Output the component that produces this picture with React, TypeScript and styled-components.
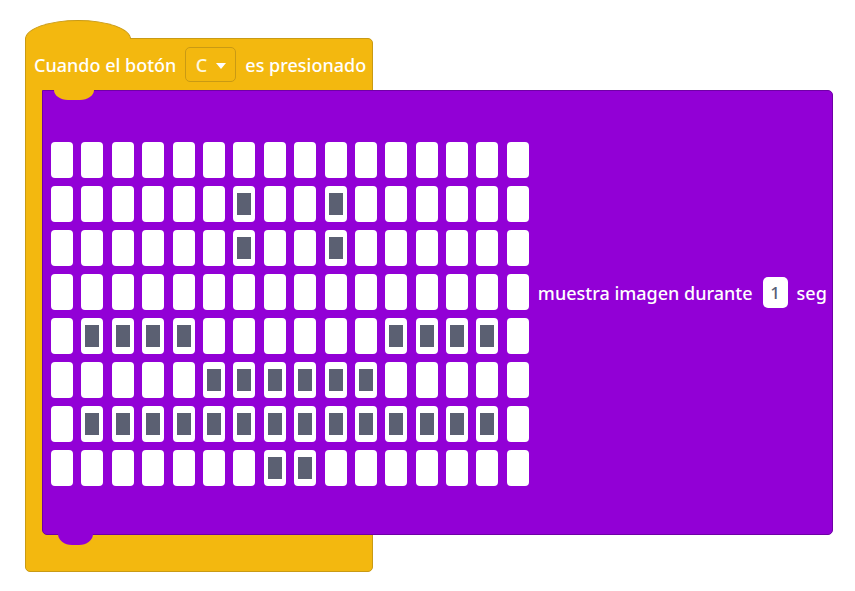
import React from "react";
import styled, { createGlobalStyle } from "styled-components";

const Global = createGlobalStyle`
  html, body { margin: 0; padding: 0; background: #ffffff; }
  body { font-family: "Noto Sans", "Open Sans", Arial, sans-serif; }
`;

const YELLOW = "#f3b80f";
const YELLOW_EDGE = "#c99a14";
const PURPLE = "#9200d6";
const PURPLE_EDGE = "#6f00a6";
const DARK = "#5b6072";

const Page = styled.div`
  padding: 38px 0 0 25px;
`;

const HatBlock = styled.div`
  position: relative;
  width: 348px;
  box-sizing: border-box;
  background: ${YELLOW};
  border: 1px solid ${YELLOW_EDGE};
  border-radius: 0 5px 5px 5px;
  display: flex;
  flex-direction: column;

  &::before {
    content: "";
    position: absolute;
    left: -1px;
    top: -19px;
    width: 106px;
    height: 19px;
    box-sizing: border-box;
    background: ${YELLOW};
    border: 1px solid ${YELLOW_EDGE};
    border-bottom: none;
    border-radius: 53px 53px 0 0 / 19px 19px 0 0;
  }
  &::after {
    content: "";
    position: absolute;
    left: 0;
    top: -1px;
    width: 104px;
    height: 2px;
    background: ${YELLOW};
  }
`;

const Header = styled.div`
  height: 51px;
  display: flex;
  align-items: center;
  gap: 9px;
  padding-left: 8px;
  color: #ffffff;
  font-size: 18px;
  font-weight: 500;
  white-space: nowrap;
`;

const Dropdown = styled.div`
  width: 51px;
  height: 35px;
  box-sizing: border-box;
  border: 1px solid ${YELLOW_EDGE};
  border-radius: 5px;
  display: flex;
  align-items: center;
  justify-content: center;
  gap: 9px;
  color: #fff8e0;
  font-size: 18px;
  font-weight: 500;
`;

const Caret = styled.span`
  width: 0;
  height: 0;
  border-left: 5px solid transparent;
  border-right: 5px solid transparent;
  border-top: 6px solid #ffffff;
  margin-top: 2px;
`;

const Panel = styled.div`
  position: relative;
  margin-left: 16px;
  width: 791px;
  height: 445px;
  box-sizing: border-box;
  background: ${PURPLE};
  border: 1px solid ${PURPLE_EDGE};
  border-radius: 0 5px 5px 5px;
  display: flex;
  align-items: flex-start;
  padding: 51px 0 0 8px;

  &::before {
    content: "";
    position: absolute;
    top: -1px;
    left: 11px;
    width: 40px;
    height: 10px;
    background: ${YELLOW};
    border-radius: 0 0 14px 14px / 0 0 10px 10px;
  }
  &::after {
    content: "";
    position: absolute;
    bottom: -11px;
    left: 15px;
    width: 35px;
    height: 11px;
    background: ${PURPLE};
    border-radius: 0 0 14px 14px / 0 0 11px 11px;
  }
`;

const Grid = styled.div`
  display: grid;
  grid-template-columns: repeat(16, 22px);
  grid-auto-rows: 36px;
  column-gap: 8.4px;
  row-gap: 8px;
`;

const Cell = styled.div<{ $lit: boolean }>`
  box-sizing: border-box;
  border-radius: 4px;
  background: ${(p) => (p.$lit ? DARK : "#ffffff")};
  border-style: solid;
  border-color: #ffffff;
  border-width: ${(p) => (p.$lit ? "7px 4px" : "0")};
`;

const Label = styled.div`
  margin: 135px 0 0 9px;
  height: 31px;
  display: flex;
  align-items: center;
  gap: 9px;
  color: #ffffff;
  font-size: 18px;
  font-weight: 500;
  white-space: nowrap;
`;

const NumberBox = styled.div`
  width: 25px;
  height: 31px;
  border-radius: 5px;
  background: #ffffff;
  color: #575e75;
  font-size: 17px;
  display: flex;
  align-items: center;
  justify-content: center;
  margin-left: 1px;
`;

const Footer = styled.div`
  height: 36px;
`;

const lit: Record<number, number[]> = {
  1: [6, 9],
  2: [6, 9],
  4: [1, 2, 3, 4, 11, 12, 13, 14],
  5: [5, 6, 7, 8, 9, 10],
  6: [1, 2, 3, 4, 5, 6, 7, 8, 9, 10, 11, 12, 13, 14],
  7: [7, 8],
};

export default function App() {
  const cells: React.ReactNode[] = [];
  for (let r = 0; r < 8; r++) {
    for (let c = 0; c < 16; c++) {
      const on = (lit[r] || []).includes(c);
      cells.push(<Cell key={`${r}-${c}`} $lit={on} />);
    }
  }
  return (
    <>
      <Global />
      <Page>
        <HatBlock>
          <Header>
            <span>Cuando el botón</span>
            <Dropdown>
              <span>C</span>
              <Caret />
            </Dropdown>
            <span>es presionado</span>
          </Header>
          <Panel>
            <Grid>{cells}</Grid>
            <Label>
              <span>muestra imagen durante</span>
              <NumberBox>1</NumberBox>
              <span>seg</span>
            </Label>
          </Panel>
          <Footer />
        </HatBlock>
      </Page>
    </>
  );
}
